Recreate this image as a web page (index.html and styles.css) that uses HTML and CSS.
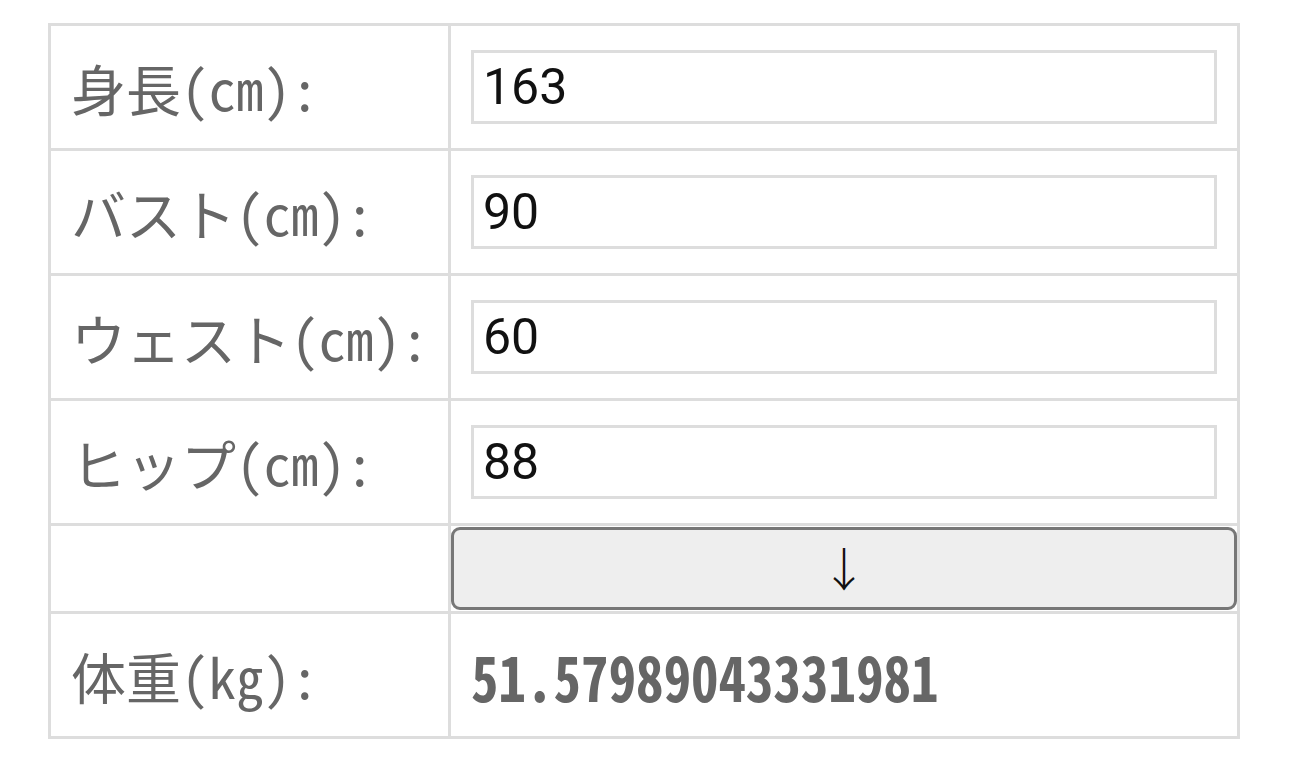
FILE: index.html
```html
<!DOCTYPE html>
<html lang="ja">
<head>
<meta charset="utf-8">
<title>体重計算</title>
<link rel="stylesheet" href="styles.css">
</head>
<body>
<div class="page">
  <table class="calc">
    <colgroup><col class="col-label"><col class="col-field"></colgroup>
    <tbody>
      <tr>
        <th class="label">身長(cm):</th>
        <td class="field"><input class="num" type="text" value="163"></td>
      </tr>
      <tr>
        <th class="label">バスト(cm):</th>
        <td class="field"><input class="num" type="text" value="90"></td>
      </tr>
      <tr>
        <th class="label">ウェスト(cm):</th>
        <td class="field"><input class="num" type="text" value="60"></td>
      </tr>
      <tr>
        <th class="label">ヒップ(cm):</th>
        <td class="field"><input class="num" type="text" value="88"></td>
      </tr>
      <tr class="btn-row">
        <th class="label empty"></th>
        <td class="field btn-cell"><button class="calc-btn" type="button">↓</button></td>
      </tr>
      <tr>
        <th class="label">体重(kg):</th>
        <td class="field result"><span class="result-value">51.57989043331981</span></td>
      </tr>
    </tbody>
  </table>
</div>
</body>
</html>
```

FILE: styles.css
```css
html, body {
  margin: 0;
  padding: 0;
  background: #ffffff;
}

.page {
  padding: 23px 0 0 48px;
}

.calc {
  border-collapse: collapse;
  table-layout: fixed;
  width: 1189px;
  border: 3px solid #dddddd;
}

.col-label { width: 400px; }
.col-field { width: 789px; }

.calc th,
.calc td {
  border: 3px solid #dddddd;
  padding: 24px 20px;
  height: 74px;
  vertical-align: middle;
  text-align: left;
}

.label {
  font-family: "Noto Sans Mono CJK JP", "Noto Sans CJK JP", "DejaVu Sans Mono", monospace;
  font-weight: normal;
  font-size: 55px;
  line-height: 1.2;
  color: #666666;
  white-space: nowrap;
}

.num {
  display: block;
  box-sizing: border-box;
  width: 100%;
  height: 74px;
  margin: 0;
  border: 3px solid #dddddd;
  border-radius: 0;
  padding: 0 9px;
  font-family: Roboto, "Liberation Sans", sans-serif;
  font-size: 50px;
  color: #111111;
  background: #ffffff;
  outline: none;
}

.btn-row th,
.btn-row td {
  height: 83px;
  padding: 1px 0;
}

.btn-row .btn-cell {
  padding: 1px 0 1px 0;
}

.calc-btn {
  display: block;
  box-sizing: border-box;
  width: 100%;
  height: 83px;
  margin: 0;
  border: 3px solid #777777;
  border-radius: 9px;
  background: #eeeeee;
  font-family: "Noto Sans CJK JP", "DejaVu Sans", sans-serif;
  font-size: 46px;
  font-weight: 300;
  color: #111111;
  padding: 0 0 6px 0;
  cursor: pointer;
}

.result {
  font-family: "Noto Sans Mono CJK JP", "Noto Sans CJK JP", "DejaVu Sans Mono", monospace;
  font-weight: bold;
  font-size: 55px;
  line-height: 1.2;
  color: #666666;
  white-space: nowrap;
}

.result-value {
  display: inline-block;
  transform: scaleY(1.14);
  transform-origin: 50% 55%;
}
```
